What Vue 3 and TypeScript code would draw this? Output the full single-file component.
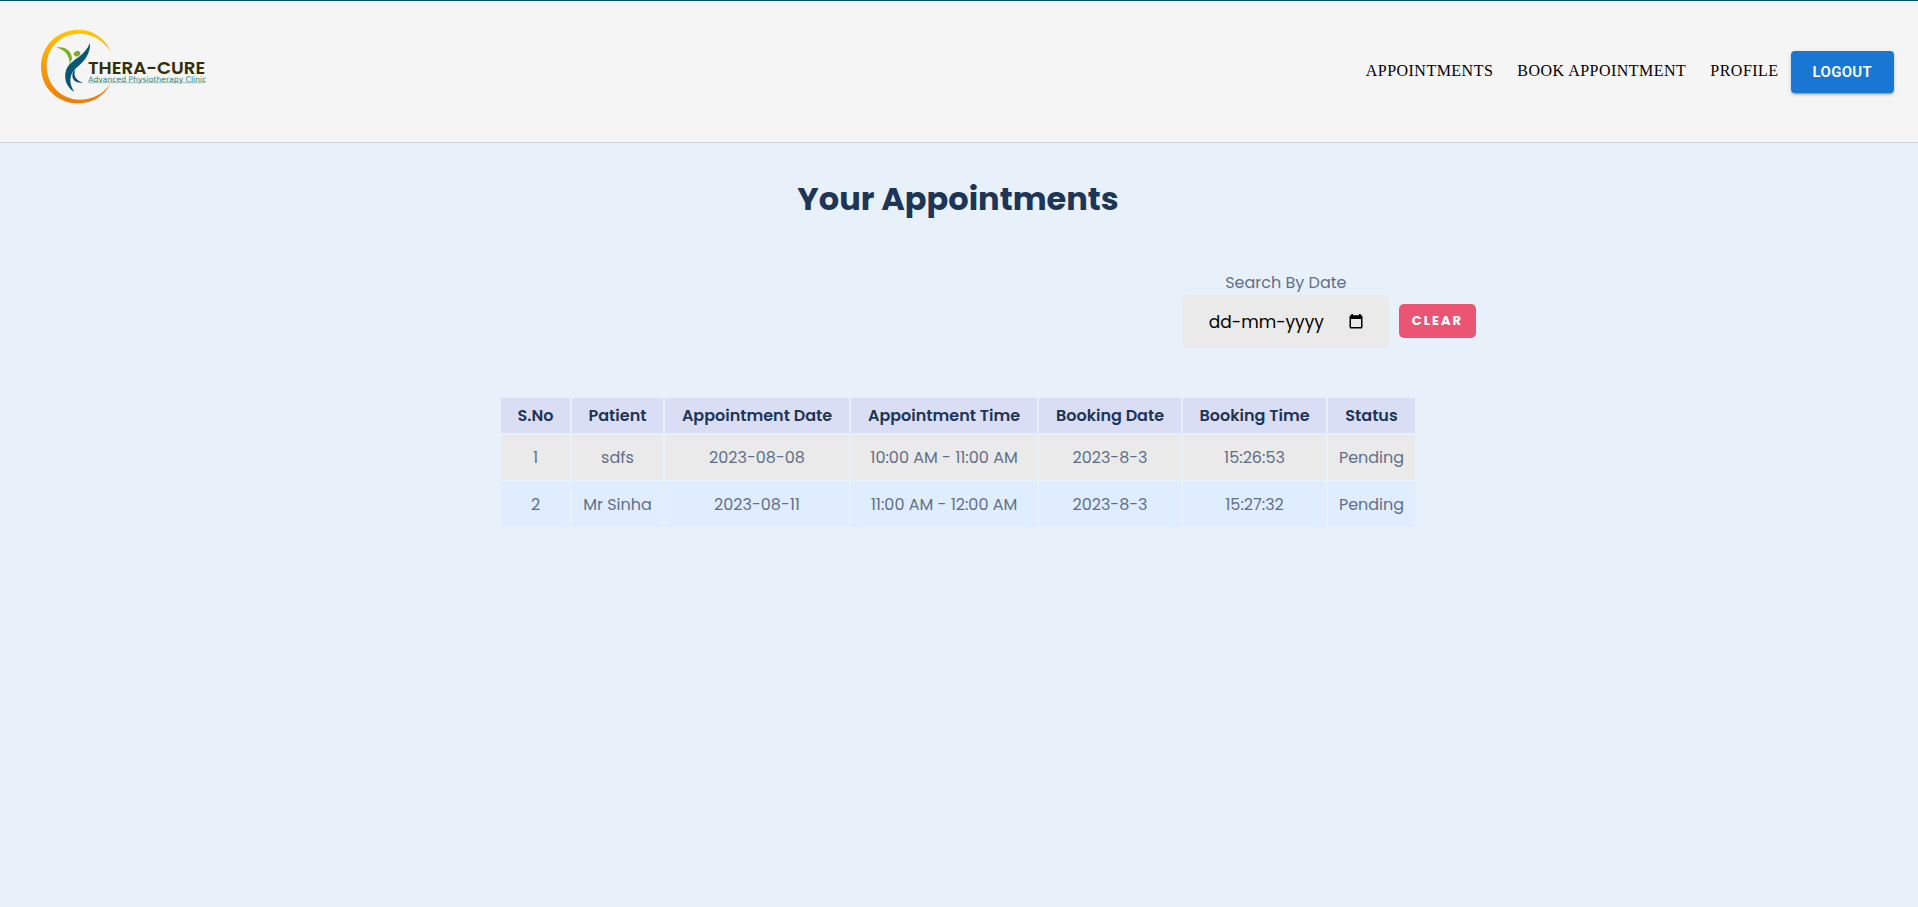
<script setup lang="ts">
import { computed, ref } from 'vue'

interface Appointment {
  id: number
  patient: string
  date: string
  time: string
  bookingDate: string
  bookingTime: string
  status: string
}

const appointments: Appointment[] = [
  { id: 1, patient: 'sdfs', date: '2023-08-08', time: '10:00 AM - 11:00 AM', bookingDate: '2023-8-3', bookingTime: '15:26:53', status: 'Pending' },
  { id: 2, patient: 'Mr Sinha', date: '2023-08-11', time: '11:00 AM - 12:00 AM', bookingDate: '2023-8-3', bookingTime: '15:27:32', status: 'Pending' },
]

const columns = [
  { key: 'sno', label: 'S.No' },
  { key: 'patient', label: 'Patient' },
  { key: 'date', label: 'Appointment Date' },
  { key: 'time', label: 'Appointment Time' },
  { key: 'booking-date', label: 'Booking Date' },
  { key: 'booking-time', label: 'Booking Time' },
  { key: 'status', label: 'Status' },
]

const search = ref('')
const dateField = ref<HTMLInputElement | null>(null)

// The field takes dd-mm-yyyy while the records hold yyyy-mm-dd.
const visible = computed(() => {
  const parts = search.value.trim().split('-')
  if (parts.length !== 3 || parts[2].length !== 4) return appointments
  const iso = parts.reverse().join('-')
  return appointments.filter((a) => a.date === iso)
})
</script>

<template>
  <div class="page">
    <header class="header">
      <a class="brand" href="#" aria-label="Thera-Cure home">
        <svg class="logo" viewBox="0 0 570 285" role="img" aria-label="Thera-Cure Advanced Physiotherapy Clinic">
          <defs>
            <linearGradient id="ring" x1="0" y1="0" x2="0" y2="1">
              <stop offset="0" stop-color="#ffc80a" />
              <stop offset="0.5" stop-color="#f79a0c" />
              <stop offset="1" stop-color="#ee7d05" />
            </linearGradient>
          </defs>
          <path d="M243 95C221 50 187 29 144 29C82 29 33 78 33 140C33 202 82 250 144 250C188 250 225 226 241 192C218 224 185 239 148 239C94 239 50 195 50 139C50 84 92 41 147 41C188 41 219 61 243 95Z" fill="url(#ring)" />
          <path d="M79 83C102 77 126 92 126 116L119 134C120 108 106 88 79 83Z" fill="#7fb01f" />
          <ellipse cx="141" cy="101" rx="10" ry="8" transform="rotate(-20 141 101)" fill="#7fb01f" />
          <path d="M180 69C182 99 164 124 143 140C121 157 112 183 133 216C106 200 98 166 113 140C126 119 164 109 180 69Z" fill="#075872" />
          <path d="M136 149C129 166 137 181 159 188C140 191 126 181 127 166C127 158 130 153 136 149Z" fill="#124f76" />
          <text class="logo-name" x="174" y="161">THERA-CURE</text>
          <text class="logo-tag" x="175" y="186">Advanced Physiotherapy Clinic</text>
          <path d="M175 188H525" stroke="#69a899" stroke-width="2" />
        </svg>
      </a>
      <nav class="nav" aria-label="Main">
        <a href="#appointments">APPOINTMENTS</a>
        <a href="#book">BOOK APPOINTMENT</a>
        <a href="#profile">PROFILE</a>
        <button class="logout" type="button">LOGOUT</button>
      </nav>
    </header>

    <main class="main">
      <h1 class="title">Your Appointments</h1>

      <form class="search" @submit.prevent>
        <div class="field">
          <label for="search-date">Search By Date</label>
          <div class="date-box">
            <input id="search-date" ref="dateField" v-model="search" type="text" placeholder="dd-mm-yyyy" autocomplete="off" />
            <button class="picker" type="button" aria-label="Choose date" @click="dateField?.focus()">
              <svg viewBox="0 0 14 15" aria-hidden="true">
                <path fill-rule="evenodd" d="M2.3 0H4V1.2H10V0H11.7V1.2H12.5L13.5 2.2V13.5L12.5 14.5H1.5L.5 13.5V2.2L1.5 1.2H2.3ZM2 5V13H12V5Z" />
              </svg>
            </button>
          </div>
        </div>
        <button class="clear" type="button" @click="search = ''">CLEAR</button>
      </form>

      <table class="table">
        <colgroup>
          <col v-for="c in columns" :key="c.key" :class="`col-${c.key}`" />
        </colgroup>
        <thead>
          <tr>
            <th v-for="c in columns" :key="c.key" scope="col">{{ c.label }}</th>
          </tr>
        </thead>
        <tbody>
          <tr v-for="a in visible" :key="a.id">
            <td>{{ a.id }}</td>
            <td>{{ a.patient }}</td>
            <td>{{ a.date }}</td>
            <td>{{ a.time }}</td>
            <td>{{ a.bookingDate }}</td>
            <td>{{ a.bookingTime }}</td>
            <td>{{ a.status }}</td>
          </tr>
        </tbody>
      </table>
    </main>
  </div>
</template>

<style>
body {
  margin: 0;
  background: #e8f1fa;
}
</style>

<style scoped>
.page {
  min-height: 100vh;
  box-sizing: border-box;
  border-top: 1px solid #02506a;
  background: #e8f1fa;
  color: #5f6f89;
  font-family: Poppins, Inter, sans-serif;
  font-size: 16px;
  line-height: 24px;
}

.header {
  display: flex;
  align-items: center;
  justify-content: space-between;
  box-sizing: border-box;
  height: 142px;
  padding: 0 24px 0 30px;
  border-bottom: 1px solid #d0d5da;
  background: #f5f5f5;
}

.brand {
  display: block;
  padding-bottom: 8px;
}

.logo {
  display: block;
  width: 190px;
  height: 95px;
}

.logo-name {
  fill: #332f09;
  font: 600 55px Poppins, "Open Sans", sans-serif;
}

.logo-tag {
  fill: #347e70;
  font: 400 23px "DejaVu Sans", sans-serif;
}

.nav {
  display: flex;
  align-items: center;
  gap: 24px;
  font-family: "Liberation Serif", serif;
}

.nav a {
  padding-bottom: 2px;
  color: #000;
  letter-spacing: 0.03em;
  text-decoration: none;
}

.logout {
  height: 42px;
  margin-left: -12px;
  padding: 0 22px;
  border: 0;
  border-radius: 4px;
  background: #1976d2;
  box-shadow: 0 3px 1px -2px #0003, 0 2px 2px #0002, 0 1px 5px #0002;
  color: #fff;
  font: 600 15px/26px Roboto, sans-serif;
  letter-spacing: 0.02em;
  cursor: pointer;
}

.main {
  display: flex;
  flex-direction: column;
  align-items: center;
  padding: 32px 2px 32px 0;
}

.title {
  margin: 0;
  color: #1d3557;
  font-size: 32px;
  font-weight: 700;
  line-height: 48px;
}

.search {
  display: flex;
  align-items: flex-end;
  justify-content: flex-end;
  gap: 10px;
  box-sizing: border-box;
  width: 1036px;
  max-width: 100%;
  margin: 48px 0;
}

.field {
  display: flex;
  flex-direction: column;
  align-items: center;
}

.date-box {
  display: flex;
  align-items: center;
  box-sizing: border-box;
  width: 206px;
  height: 53px;
  padding: 0 26px;
  border-radius: 5px;
  background: #eaeaea;
}

.date-box input {
  flex: 1;
  min-width: 0;
  padding: 0;
  border: 0;
  outline: 0;
  background: transparent;
  color: #000;
  font: inherit;
  font-size: 17px;
}

.date-box input::placeholder {
  color: #000;
  opacity: 1;
}

.picker {
  display: flex;
  padding: 0;
  border: 0;
  background: none;
  cursor: pointer;
}

.picker svg {
  width: 14px;
  height: 15px;
}

.clear {
  height: 34px;
  margin-bottom: 10px;
  padding: 0 13px;
  border: 0;
  border-radius: 5px;
  background: #ec5473;
  color: #fff;
  font: 700 13px/20px Poppins, Inter, sans-serif;
  letter-spacing: 2px;
  cursor: pointer;
}

.table {
  border-spacing: 2px;
  text-align: center;
}

.col-sno { width: 69px; }
.col-patient { width: 91px; }
.col-date { width: 184px; }
.col-time { width: 186px; }
.col-booking-date { width: 142px; }
.col-booking-time { width: 143px; }
.col-status { width: 87px; }

.table th {
  height: 35px;
  padding: 0;
  background: #dadef5;
  color: #1d3557;
  font-weight: 600;
}

.table td {
  height: 45px;
  padding: 0;
  background: #eaeaea;
}

.table tbody tr:nth-child(even) td {
  background: #e0edff;
}
</style>
